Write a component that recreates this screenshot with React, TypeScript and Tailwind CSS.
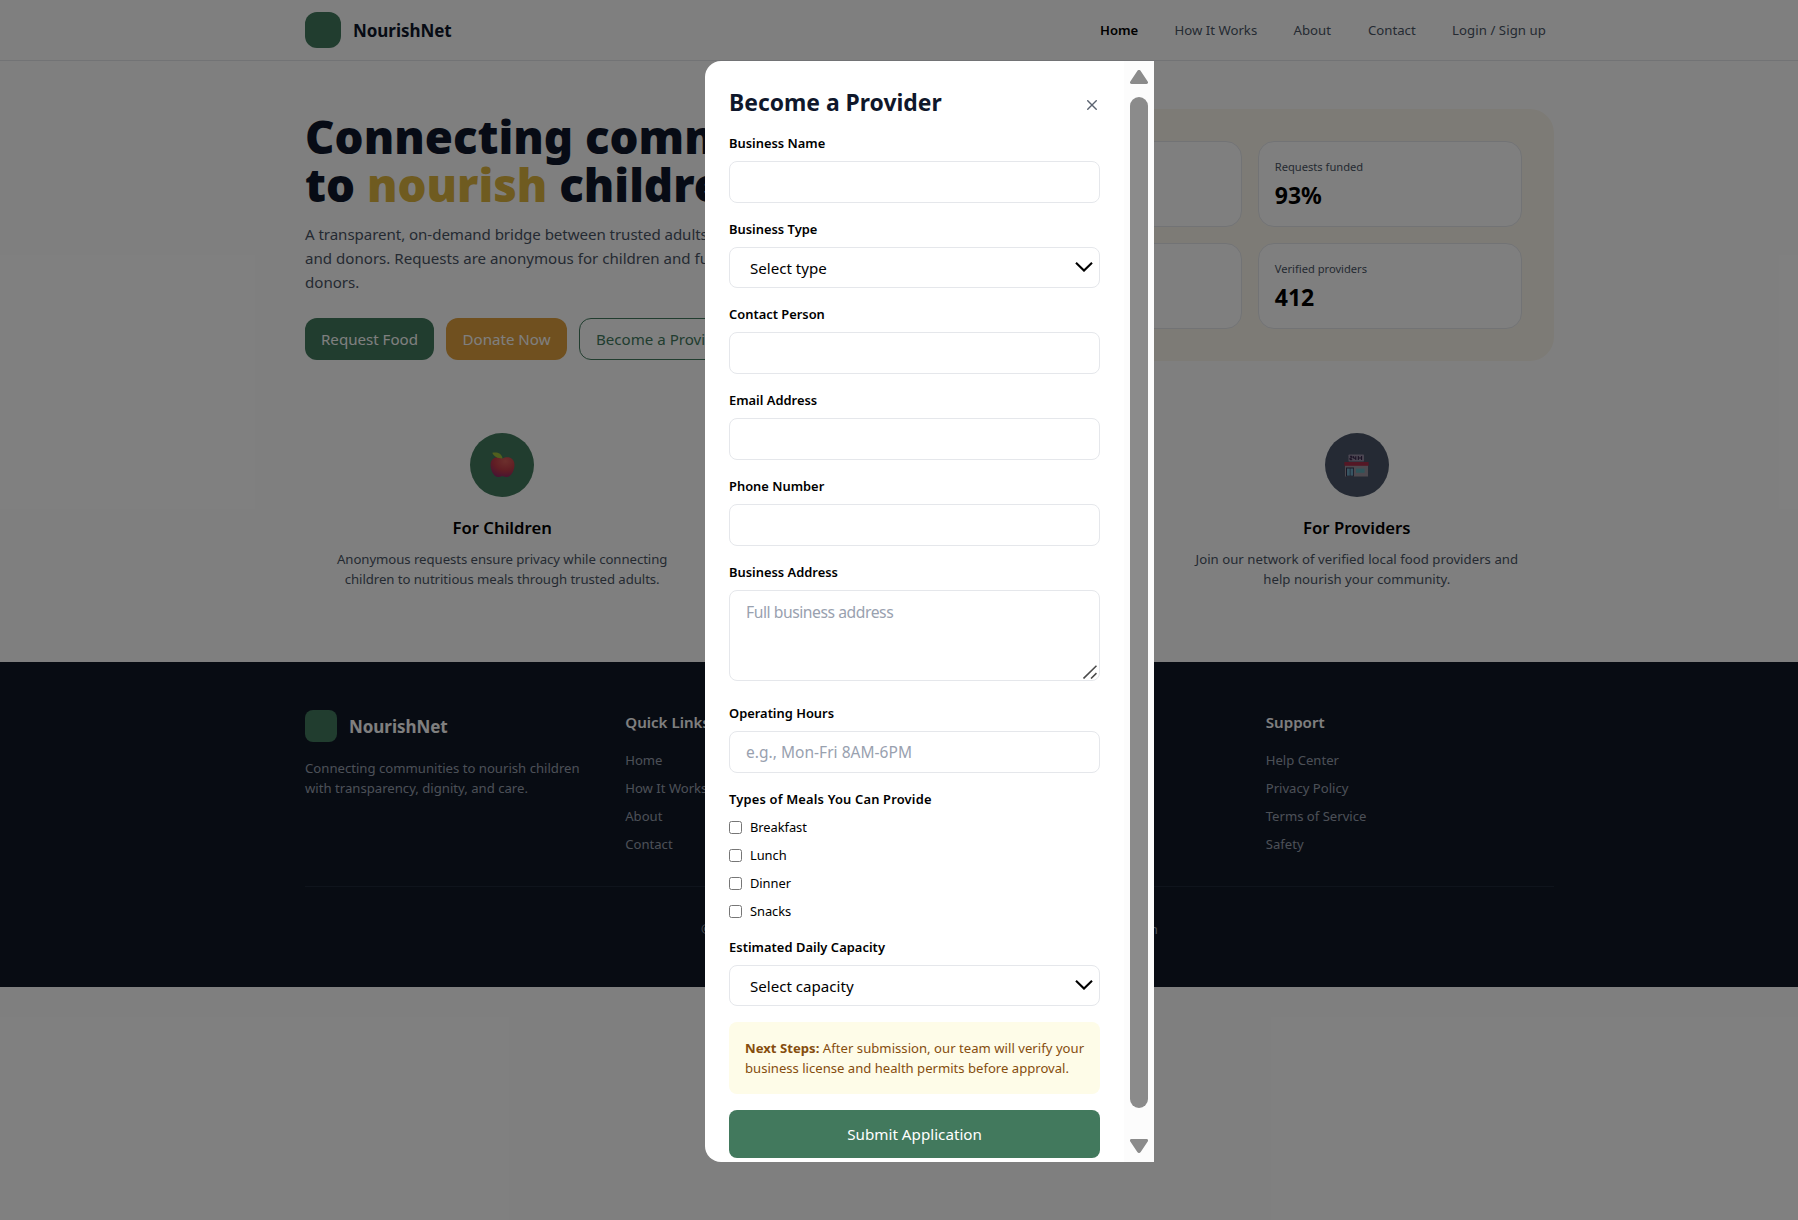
import React from "react";

const FONT = "font-['Noto_Sans','Open_Sans',sans-serif]";

function Header() {
  return (
    <header className="h-[61px] border-b border-gray-200">
      <div className="mx-auto flex h-[60px] w-[1249px] items-center justify-between pr-2">
        <div className="flex items-center gap-3">
          <div className="size-9 rounded-xl bg-[#427a5e]" />
          <span className="pt-0.5 text-[17px] font-bold tracking-[-0.05px] text-slate-900">NourishNet</span>
        </div>
        <nav className="flex items-center gap-9 pt-0.5 text-[13.2px] whitespace-nowrap text-gray-600">
          <a className="w-[38.5px] text-[13.1px] font-semibold text-black">Home</a>
          <a className="w-[83px]">How It Works</a>
          <a className="w-[38.5px]">About</a>
          <a className="w-[48px]">Contact</a>
          <a className="w-[94px] tracking-[0.07px]">Login / Sign up</a>
        </nav>
      </div>
    </header>
  );
}

function Stat({ label, value }: { label: string; value: string }) {
  return (
    <div className="h-[86px] rounded-2xl border border-gray-200 bg-white px-4 pt-[17px]">
      <div className="text-[11.15px] leading-4 text-gray-600">{label}</div>
      <div className="mt-1 text-[23px] leading-8 font-bold text-black">{value}</div>
    </div>
  );
}

function Hero() {
  return (
    <section className="mx-auto grid w-[1249px] grid-cols-2 gap-8 py-12">
      <div className="h-[252px]">
        <h1 className="h-[113px] pt-[3px] text-[45.6px] leading-[48px] font-black whitespace-nowrap text-slate-900">
          Connecting communities
          <br />
          to <span className="text-[#dfb640]">nourish</span> children
        </h1>
        <p className="text-[15.1px] leading-6 whitespace-nowrap text-gray-600">
          <span className="tracking-[-0.06px]">A transparent, on-demand bridge between trusted adults, providers,</span>
          <br />
          and donors. Requests are anonymous for children and funded by
          <br />
          donors.
        </p>
        <div className="mt-6 flex gap-3 text-[15.1px] whitespace-nowrap">
          <button className="h-[42px] w-[129px] rounded-xl bg-[#427a5e] text-white">Request Food</button>
          <button className="h-[42px] w-[121px] rounded-xl bg-[#e0a03e] text-white">Donate Now</button>
          <button className="h-[42px] rounded-xl border border-[#427a5e] px-4 text-[#427a5e]">Become a Provider</button>
        </div>
      </div>
      <div className="grid h-[252px] grid-cols-2 gap-4 rounded-3xl bg-[#fbf7ed] p-8">
        <Stat label="Meals delivered" value="12,480" />
        <Stat label="Requests funded" value="93%" />
        <Stat label="Active donors" value="3,209" />
        <Stat label="Verified providers" value="412" />
      </div>
    </section>
  );
}

function AppleIcon() {
  return (
    <svg viewBox="0 0 25 26" className="h-[26px] w-[25px]">
      <defs>
        <radialGradient id="apple" cx="0.62" cy="0.2" r="0.85">
          <stop offset="0" stopColor="#d9605a" />
          <stop offset="0.55" stopColor="#c23c48" />
          <stop offset="1" stopColor="#8e2866" />
        </radialGradient>
      </defs>
      <path d="M12.5 6.400c2-1.200 5.600-1.900 8.300-.5 2.800 1.500 4 4.600 3.600 8.300-.4 4.500-2.700 9.300-6.200 10.600-2.200.8-3.800-.5-5.700-.5s-3.500 1.300-5.700.5C3.300 23.500 1 18.700.6 14.200.2 10.500 1.400 7.400 4.200 5.900c2.700-1.400 6.300-.7 8.300.5z" fill="url(#apple)" />
      <path d="M2.300.8c4.800-1 9.200.3 10.300 5.600C8 6.500 3.900 5 2.300.8z" fill="#a3bf3c" />
    </svg>
  );
}

function StoreIcon() {
  return (
    <svg viewBox="0 0 25 23" className="h-[23px] w-[25px]">
      <rect x="4.500" y="0.500" width="15.500" height="7" rx="0.800" fill="#978ca4" />
      <path d="M6 2.300h2v1.700H6v1.700h2.200M9.600 2.200v2h2.200M11.800 2.200v3.800M14.300 2v4M17.600 2v4M14.300 4h3.300" fill="none" stroke="#2e1a40" strokeWidth="1" />
      <rect x="1" y="11" width="23" height="11.500" fill="#9a939e" />
      <rect x="0.400" y="8" width="24.200" height="3.800" fill="#a82f4a" />
      <rect x="2" y="13.500" width="8" height="9" fill="#34304a" />
      <rect x="3" y="14.500" width="2.800" height="7.200" fill="#6fa9c4" />
      <rect x="6.400" y="14.500" width="2.800" height="7.200" fill="#6fa9c4" />
      <rect x="12" y="14.600" width="8.600" height="4.200" fill="#5fa9b4" />
    </svg>
  );
}

function Feature({ color, icon, title, lines, spacing }: { color: string; icon: React.ReactNode; title: string; lines: string[]; spacing: string }) {
  return (
    <div className="flex flex-col items-center p-6">
      <div className={`flex size-16 items-center justify-center rounded-full ${color}`}>{icon}</div>
      <h3 className="mt-[17px] text-[16.7px] leading-7 font-semibold text-black">{title}</h3>
      <p className={`mt-[7px] text-center text-[13.2px] leading-5 whitespace-nowrap text-gray-600 ${spacing}`}>
        {lines[0]}
        <br />
        {lines[1]}
      </p>
    </div>
  );
}

function Features() {
  return (
    <section className="mx-auto grid w-[1249px] grid-cols-3 gap-[33px] pb-[49px]">
      <Feature
        color="bg-[#427a5e]"
        icon={<AppleIcon />}
        title="For Children"
        spacing="tracking-[-0.06px]"
        lines={["Anonymous requests ensure privacy while connecting", "children to nutritious meals through trusted adults."]}
      />
      <Feature
        color="bg-[#e0a03e]"
        icon={null}
        title="For Donors"
        spacing="tracking-normal"
        lines={["Fund specific requests and see the direct", "impact of your generosity."]}
      />
      <Feature
        color="bg-[#4a5568]"
        icon={<StoreIcon />}
        title="For Providers"
        spacing="tracking-[0.02px]"
        lines={["Join our network of verified local food providers and", "help nourish your community."]}
      />
    </section>
  );
}

function LinkColumn({ title, links }: { title: string; links: string[] }) {
  return (
    <div>
      <h4 className="text-[15.1px] leading-6 font-semibold text-white">{title}</h4>
      <ul className="mt-4 space-y-2 text-[13.1px] leading-5 text-gray-400">
        {links.map((link) => (
          <li key={link}>{link}</li>
        ))}
      </ul>
    </div>
  );
}

function Footer() {
  return (
    <footer className="h-[325px] bg-[#111827] pt-12">
      <div className="mx-auto w-[1249px]">
        <div className="grid h-[176px] grid-cols-4 gap-8">
          <div>
            <div className="flex h-8 items-center gap-3">
              <div className="size-8 rounded-lg bg-[#427a5e]" />
              <span className="pt-0.5 text-[17px] font-bold tracking-[-0.05px] text-white">NourishNet</span>
            </div>
            <p className="mt-4 text-[13.15px] leading-5 whitespace-nowrap text-gray-400">
              Connecting communities to nourish children
              <br />
              with transparency, dignity, and care.
            </p>
          </div>
          <LinkColumn title="Quick Links" links={["Home", "How It Works", "About", "Contact"]} />
          <LinkColumn title="Get Involved" links={["Donate", "Request Food", "Providers"]} />
          <LinkColumn title="Support" links={["Help Center", "Privacy Policy", "Terms of Service", "Safety"]} />
        </div>
        <div className="flex justify-center border-t border-gray-800 pt-8 text-[13.2px] leading-5 whitespace-nowrap text-gray-400">
          <span>© 2025 NourishNet. All rights reserved. Feeding children with compassion</span>
        </div>
      </div>
    </footer>
  );
}

const INPUT = "block w-full rounded-lg border border-gray-200 bg-white px-4 placeholder:text-gray-400 outline-none";

function Label({ children, className = "" }: { children: React.ReactNode; className?: string }) {
  return <div className={`text-[12.9px] leading-5 font-semibold whitespace-nowrap text-black ${className}`}>{children}</div>;
}

function Field({ label, placeholder }: { label: string; placeholder?: string }) {
  return (
    <div className="h-[86px]">
      <Label>{label}</Label>
      <input className={`${INPUT} mt-2 h-[42px] text-[15.5px] tracking-[0.03px]`} placeholder={placeholder} />
    </div>
  );
}

function SelectBox({ text }: { text: string }) {
  return (
    <div className="mt-2 flex h-[41px] w-full items-center justify-between rounded-lg border border-gray-200 pr-1.5 pl-5 text-[15.1px] text-black">
      <span className="pt-0.5">{text}</span>
      <svg viewBox="0 0 18 10" className="-mt-px h-[10px] w-[18px]" fill="none" stroke="#000" strokeWidth="2.100">
        <path d="M1 .8 9 8.600 17 .8" />
      </svg>
    </div>
  );
}

function Scrollbar() {
  return (
    <div className="flex w-[30px] flex-col items-center bg-[#fcfcfc] pt-[9px]">
      <svg viewBox="0 0 18 14" className="h-[14px] w-[18px] shrink-0" fill="#8b8b8b">
        <path d="M7.300.9a2 2 0 0 1 3.400 0L17.700 11.500c.7 1.200.2 2.500-1.200 2.500h-15C.1 14-.4 12.700.3 11.500z" />
      </svg>
      <div className="mt-[13px] h-[1011px] w-[18px] shrink-0 rounded-full bg-[#8b8b8b]" />
      <svg viewBox="0 0 18 14" className="mt-[31px] h-[14px] w-[18px] shrink-0 rotate-180" fill="#8b8b8b">
        <path d="M7.300.9a2 2 0 0 1 3.400 0L17.700 11.500c.7 1.200.2 2.500-1.200 2.500h-15C.1 14-.4 12.700.3 11.500z" />
      </svg>
    </div>
  );
}

function ProviderModal() {
  return (
    <div className="flex h-[1101px] w-[449px] overflow-hidden rounded-l-2xl bg-white">
      <div className="flex-1 px-6 pt-6">
        <div className="flex h-8 items-center justify-between pr-[3px]">
          <h2 className="pt-1 text-[22.9px] leading-8 font-bold whitespace-nowrap text-slate-900">Become a Provider</h2>
          <svg viewBox="0 0 10 10" className="mt-[7px] size-[10px]" stroke="#5b6370" strokeWidth="1.400">
            <path d="M.3.3 9.700 9.700M9.700.3.3 9.700" />
          </svg>
        </div>
        <div className="pt-4">
          <Field label="Business Name" />
          <div className="h-[85px]">
            <Label>Business Type</Label>
            <SelectBox text="Select type" />
          </div>
          <Field label="Contact Person" />
          <Field label="Email Address" />
          <Field label="Phone Number" />
          <div className="h-[141px]">
            <Label>Business Address</Label>
            <div className="relative mt-2 h-[91px]">
              <textarea className={`${INPUT} h-[91px] resize-none py-[9px] text-[15.700px] leading-6 tracking-[-0.45px]`} placeholder="Full business address" />
              <svg viewBox="0 0 14 14" className="absolute right-[3px] bottom-[2px] size-[14px]" stroke="#4a4a4a" strokeWidth="1.600">
                <path d="M.5 13.500 13.500.7M8 13.500l5.500-5.300" />
              </svg>
            </div>
          </div>
          <Field label="Operating Hours" placeholder="e.g., Mon-Fri 8AM-6PM" />
          <Label className="tracking-[0.18px]">Types of Meals You Can Provide</Label>
          <div className="mt-2 space-y-2 text-[12.9px] leading-5 tracking-[-0.06px] text-black">
            {["Breakfast", "Lunch", "Dinner", "Snacks"].map((meal) => (
              <label key={meal} className="flex h-5 items-center gap-2">
                <input type="checkbox" className="size-[13px] appearance-none rounded-[2.5px] border border-[#767676] bg-white" />
                {meal}
              </label>
            ))}
          </div>
          <div className="pt-4">
            <Label className="tracking-[0.04px]">Estimated Daily Capacity</Label>
            <SelectBox text="Select capacity" />
          </div>
          <div className="mt-4 h-[72px] rounded-lg bg-[#fefce8] p-4 text-[13.100px] leading-5 whitespace-nowrap text-[#854d0e]">
            <span className="tracking-[0.03px]">
              <strong>Next Steps:</strong> After submission, our team will verify your
            </span>
            <br />
            business license and health permits before approval.
          </div>
          <button className="mt-4 h-12 w-full rounded-lg bg-[#42795d] text-[15.200px] text-white">Submit Application</button>
        </div>
      </div>
      <Scrollbar />
    </div>
  );
}

export default function App() {
  return (
    <div className={`h-[1220px] w-full overflow-hidden ${FONT}`}>
      <div className="relative h-[1220px] w-[1859px] bg-white">
        <Header />
        <Hero />
        <Features />
        <Footer />
        <div className="absolute inset-0 flex items-start justify-center bg-black/50 pt-[61px]">
          <ProviderModal />
        </div>
      </div>
    </div>
  );
}
